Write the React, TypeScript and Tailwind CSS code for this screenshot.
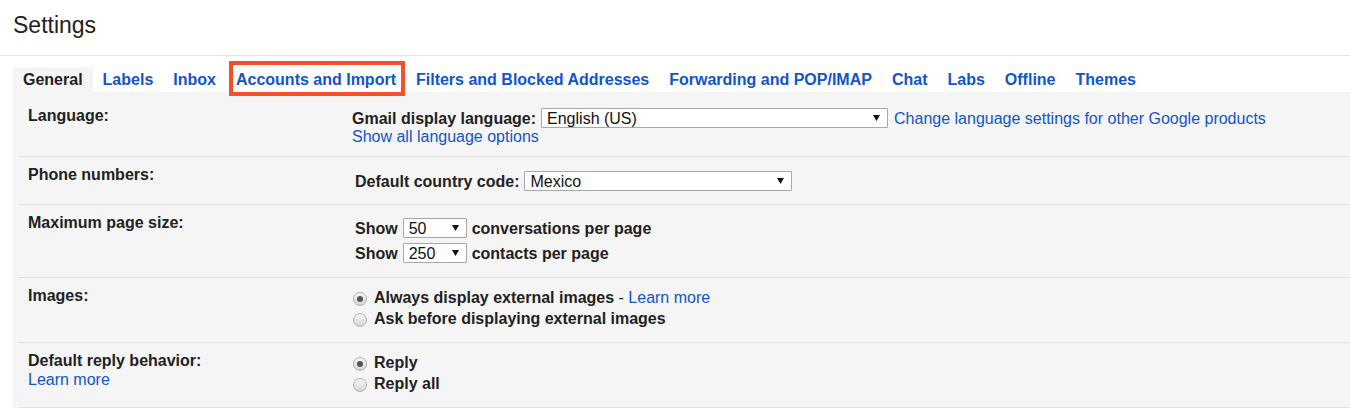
import React from "react";

const FONT = { fontFamily: '"Liberation Sans", Arial, sans-serif' };

function Arrow() {
  return (
    <svg width="7" height="6" viewBox="0 0 7 6" className="shrink-0">
      <polygon points="0,0 7,0 3.5,6" fill="#111" />
    </svg>
  );
}

function Select({ value, width }: { value: string; width: string }) {
  return (
    <div
      className={`flex h-[20px] items-center justify-between rounded-[1px] border border-[#a9a9a9] bg-white pl-[5px] pr-[7px] font-normal leading-[18px] text-[#111] ${width}`}
    >
      <span className="pt-[1px]">{value}</span>
      <Arrow />
    </div>
  );
}

function Radio({ checked }: { checked?: boolean }) {
  return (
    <span className="mt-[3px] flex h-[14px] w-[14px] shrink-0 items-center justify-center rounded-full border border-[#b0b0b0] bg-linear-to-b from-[#f7f7f7] to-[#d6d6d6]">
      {checked && <span className="h-[6px] w-[6px] rounded-full bg-[#555]" />}
    </span>
  );
}

const link = "text-[#1155cc] font-normal";

export default function App() {
  const tabs = [
    "Labels",
    "Inbox",
    "Accounts and Import",
    "Filters and Blocked Addresses",
    "Forwarding and POP/IMAP",
    "Chat",
    "Labs",
    "Offline",
    "Themes",
  ];
  return (
    <div style={FONT} className="min-h-[408px] bg-white text-[16px] text-[#222]">
      <div className="h-[56px] border-b border-[#e5e5e5] pl-[13px] pt-[11px]">
        <h1 className="text-[23px] font-normal leading-[28px] text-[#222]">Settings</h1>
      </div>
      <div className="pl-[13px] pt-[11px]">
        <div className="flex h-[25px] text-[16px] font-bold leading-[25px]">
          <div className="bg-[#f5f5f5] px-[10px] text-[#222]">General</div>
          {tabs.map((t) => (
            <div key={t} className="relative px-[10px] text-[#1155cc]">
              {t}
              {t === "Accounts and Import" && (
                <span className="pointer-events-none absolute left-[3px] top-[-6px] h-[35px] w-[176px] border-[4px] border-[#f4502a]" />
              )}
            </div>
          ))}
        </div>
        <div className="bg-[#f5f5f5]">
          {/* Language */}
          <div className="ml-[5px] flex border-b border-[#e2e2e2] pb-[10px]">
            <div className="w-[334px] shrink-0 pl-[10px] pt-[14px] font-bold leading-[20px]">Language:</div>
            <div className="pt-[16px]">
              <div className="flex h-[20px] items-center">
                <span className="mr-[5px] pt-[1px] font-bold">Gmail display language:</span>
                <Select value="English (US)" width="w-[347px]" />
                <span className={`${link} ml-[6px] pt-[1px]`}>Change language settings for other Google products</span>
              </div>
              <div className={`${link} leading-[18px]`}>Show all language options</div>
            </div>
          </div>
          {/* Phone numbers */}
          <div className="ml-[5px] flex border-b border-[#e2e2e2] pb-[13px]">
            <div className="w-[334px] shrink-0 pl-[10px] pt-[8px] font-bold leading-[20px]">Phone numbers:</div>
            <div className="pl-[3px] pt-[14px]">
              <div className="flex h-[20px] items-center">
                <span className="mr-[5px] pt-[1px] font-bold">Default country code:</span>
                <Select value="Mexico" width="w-[268px]" />
              </div>
            </div>
          </div>
          {/* Maximum page size */}
          <div className="ml-[5px] flex border-b border-[#e2e2e2] pb-[14px]">
            <div className="w-[334px] shrink-0 pl-[10px] pt-[8px] font-bold leading-[20px]">Maximum page size:</div>
            <div className="flex flex-col gap-[5px] pl-[3px] pt-[13px] font-bold">
              <div className="flex h-[20px] items-center gap-[5px]">
                <span className="pt-[1px]">Show</span>
                <Select value="50" width="w-[64px]" />
                <span className="pt-[1px]">conversations per page</span>
              </div>
              <div className="flex h-[20px] items-center gap-[5px]">
                <span className="pt-[1px]">Show</span>
                <Select value="250" width="w-[64px]" />
                <span className="pt-[1px]">contacts per page</span>
              </div>
            </div>
          </div>
          {/* Images */}
          <div className="ml-[5px] flex border-b border-[#e2e2e2] pb-[13px]">
            <div className="w-[334px] shrink-0 pl-[10px] pt-[8px] font-bold leading-[20px]">Images:</div>
            <div className="pl-[1px] pt-[9px] font-bold leading-[21px]">
              <div className="flex items-center gap-[7px]">
                <Radio checked />
                <span>
                  Always display external images<span className="font-normal"> - </span>
                  <span className={link}>Learn more</span>
                </span>
              </div>
              <div className="flex items-center gap-[7px]">
                <Radio />
                <span>Ask before displaying external images</span>
              </div>
            </div>
          </div>
          {/* Default reply behavior */}
          <div className="ml-[5px] flex border-b border-[#e2e2e2] pb-[13px]">
            <div className="w-[334px] shrink-0 pl-[10px] pt-[8px]">
              <div className="font-bold leading-[20px]">Default reply behavior:</div>
              <div className={`${link} leading-[18px]`}>Learn more</div>
            </div>
            <div className="pl-[1px] pt-[9px] font-bold leading-[21px]">
              <div className="flex items-center gap-[7px]">
                <Radio checked />
                <span>Reply</span>
              </div>
              <div className="flex items-center gap-[7px]">
                <Radio />
                <span>Reply all</span>
              </div>
            </div>
          </div>
        </div>
      </div>
    </div>
  );
}
